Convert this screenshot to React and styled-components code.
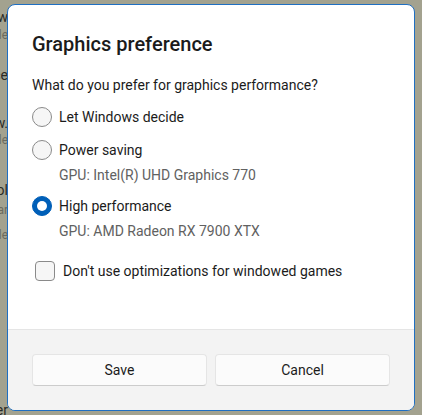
import React from "react";
import styled, { createGlobalStyle } from "styled-components";

const GlobalStyle = createGlobalStyle`
  html, body {
    margin: 0;
    padding: 0;
    background: #a3a28f;
  }
  * {
    box-sizing: border-box;
  }
`;

const Page = styled.div`
  position: relative;
  width: 422px;
  height: 415px;
  overflow: hidden;
  background: #a3a28f;
  font-family: Roboto, "Noto Sans", sans-serif;
`;

// settings page behind the dimmed overlay, only its line ends peek out
const Backdrop = styled.div`
  display: flex;
  flex-direction: column;
  width: 8px;
  padding-top: 8px;
`;

const BackLine = styled.div`
  display: flex;
  justify-content: flex-end;
  white-space: nowrap;
  margin-top: ${(p) => p.mt || 0}px;
  height: 18px;
  font-size: ${(p) => (p.sub ? 12 : 14)}px;
  line-height: 18px;
  color: ${(p) => (p.sub ? "#6b6a5e" : "#2a2a26")};
`;

const Dialog = styled.div`
  position: absolute;
  left: 7px;
  top: 4px;
  width: 408px;
  height: 407px;
  display: flex;
  flex-direction: column;
  background: #ffffff;
  border: 1px solid #1f6fc2;
  border-radius: 8px;
  overflow: hidden;
  color: #1b1b1b;
`;

const Body = styled.div`
  flex: 1;
  display: flex;
  flex-direction: column;
  padding: 25px 24px 0 24px;
`;

const Title = styled.h1`
  margin: 0;
  font-size: 20px;
  line-height: 28px;
  font-weight: 500;
`;

const Question = styled.p`
  margin: 17px 0 5px 0;
  font-size: 14px;
  line-height: 20px;
`;

const Option = styled.label`
  display: flex;
  align-items: center;
  gap: 7px;
  height: 33px;
  font-size: 14px;
`;

const RadioCircle = styled.span`
  width: 20px;
  height: 20px;
  border-radius: 50%;
  flex-shrink: 0;
  display: flex;
  align-items: center;
  justify-content: center;
  background: ${(p) => (p.checked ? "#005fb8" : "#f6f6f6")};
  border: 1px solid ${(p) => (p.checked ? "#005fb8" : "#8a8a8a")};

  &::after {
    content: "";
    display: ${(p) => (p.checked ? "block" : "none")};
    width: 10px;
    height: 10px;
    border-radius: 50%;
    background: #ffffff;
  }
`;

const GpuNote = styled.div`
  padding-left: 27px;
  height: 23px;
  font-size: 14px;
  line-height: 18px;
  color: #616161;
`;

const CheckRow = styled.label`
  display: flex;
  align-items: center;
  gap: 8px;
  margin-top: 16px;
  padding-left: 3px;
  font-size: 14px;
`;

const CheckBox = styled.span`
  width: 20px;
  height: 20px;
  border-radius: 4px;
  background: #f6f6f6;
  border: 1px solid #8a8a8a;
  flex-shrink: 0;
`;

const Footer = styled.div`
  display: grid;
  grid-template-columns: 1fr 1fr;
  gap: 8px;
  padding: 24px;
  background: #f3f3f3;
  border-top: 1px solid #e5e5e5;
`;

const Button = styled.button`
  height: 32px;
  font-family: inherit;
  font-size: 14px;
  color: #1b1b1b;
  background: #fbfbfb;
  border: 1px solid #e5e5e5;
  border-bottom-color: #cccccc;
  border-radius: 4px;
`;

const backLines = [
  { mt: 0, text: "Graphics overview" },
  { mt: 0, text: "Set the default mode", sub: true },
  { mt: 22, text: "Add an app to set a preference" },
  { mt: 30, text: "Find apps in the list below." },
  { mt: -1, text: "Apps run in default mode", sub: true },
  { mt: 32, text: "Snipping Tool" },
  { mt: 2, text: "Calendar", sub: true },
  { mt: 7, text: "Let Windows decide", sub: true },
  { mt: 157, text: "Graphics driver" },
];

const App = () => {
  return (
    <>
      <GlobalStyle />
      <Page>
        <Backdrop>
          {backLines.map((l, i) => (
            <BackLine key={i} mt={l.mt} sub={l.sub}>
              <span>{l.text}</span>
            </BackLine>
          ))}
        </Backdrop>
        <Dialog>
          <Body>
            <Title>Graphics preference</Title>
            <Question>What do you prefer for graphics performance?</Question>
            <Option>
              <RadioCircle />
              Let Windows decide
            </Option>
            <Option>
              <RadioCircle />
              Power saving
            </Option>
            <GpuNote>GPU: Intel(R) UHD Graphics 770</GpuNote>
            <Option>
              <RadioCircle checked />
              High performance
            </Option>
            <GpuNote>GPU: AMD Radeon RX 7900 XTX</GpuNote>
            <CheckRow>
              <CheckBox />
              Don't use optimizations for windowed games
            </CheckRow>
          </Body>
          <Footer>
            <Button type="button">Save</Button>
            <Button type="button">Cancel</Button>
          </Footer>
        </Dialog>
      </Page>
    </>
  );
};

export default App;
